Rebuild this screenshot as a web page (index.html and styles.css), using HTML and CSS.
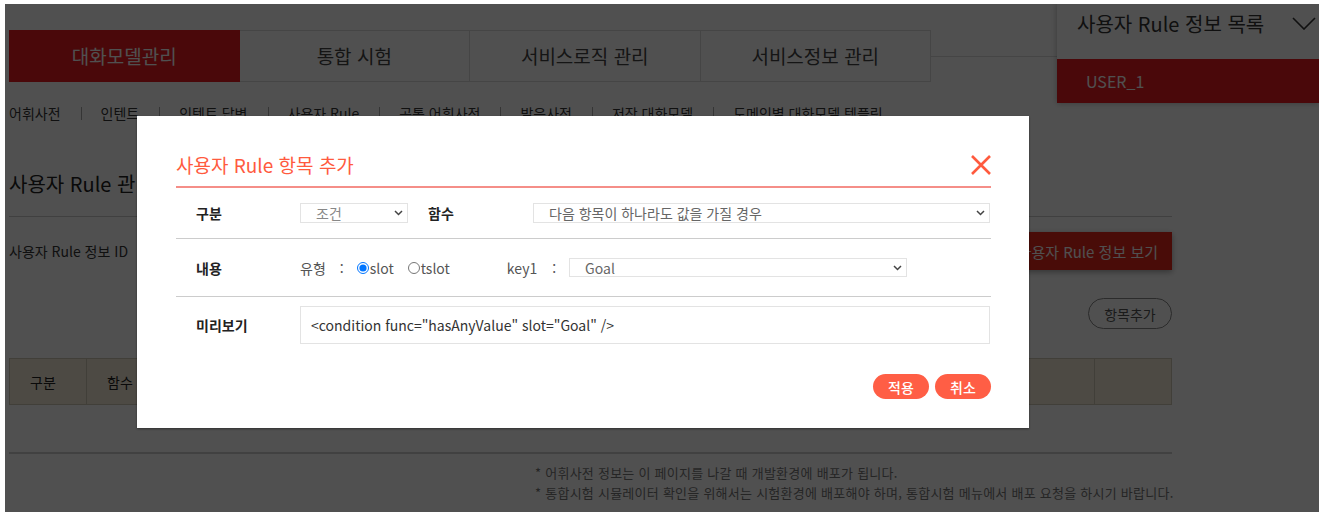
FILE: index.html
```html
<!DOCTYPE html>
<html lang="ko">
<head>
<meta charset="utf-8">
<title>사용자 Rule 관리</title>
<link rel="stylesheet" href="styles.css">
</head>
<body>
<div class="frame">
  <div class="page">
    <nav class="tabs">
      <a class="tab active">대화모델관리</a>
      <a class="tab">통합 시험</a>
      <a class="tab">서비스로직 관리</a>
      <a class="tab">서비스정보 관리</a>
      <span class="tab-fill"></span>
    </nav>
    <ul class="subnav">
      <li>어휘사전</li>
      <li>인텐트</li>
      <li>인텐트 답변</li>
      <li>사용자 Rule</li>
      <li>공통 어휘사전</li>
      <li>발음사전</li>
      <li>저장 대화모델</li>
      <li>도메인별 대화모델 템플릿</li>
    </ul>
    <h2 class="page-title">사용자 Rule 관리</h2>
    <div class="info-row">
      <span class="info-label">사용자 Rule 정보 ID</span>
      <button class="btn-red">사용자 Rule 정보 보기</button>
    </div>
    <div class="add-row">
      <button class="btn-outline">항목추가</button>
    </div>
    <table class="grid">
      <thead>
        <tr>
          <th class="c1">구분</th>
          <th class="c2">함수</th>
          <th class="c3">내용</th>
          <th class="c4"></th>
        </tr>
      </thead>
    </table>
    <div class="notes">
      <p>* 어휘사전 정보는 이 페이지를 나갈 때 개발환경에 배포가 됩니다.</p>
      <p>* 통합시험 시뮬레이터 확인을 위해서는 시험환경에 배포해야 하며, 통합시험 메뉴에서 배포 요청을 하시기 바랍니다.</p>
    </div>
  </div>

  <aside class="rule-list">
    <div class="rule-list-head">
      <span>사용자 Rule 정보 목록</span>
      <svg class="chev-lg" width="24" height="13" viewBox="0 0 24 13"><path d="M1 1 L12 12 L23 1" fill="none" stroke="#333" stroke-width="1.6"/></svg>
    </div>
    <div class="rule-item">USER_1</div>
  </aside>

  <div class="dim"></div>

  <div class="modal">
    <div class="modal-head">
      <h3>사용자 Rule 항목 추가</h3>
      <svg class="close" width="22" height="22" viewBox="0 0 22 22"><path d="M2 2 L20 20 M20 2 L2 20" stroke="#ff5a3e" stroke-width="2.6" fill="none"/></svg>
    </div>
    <div class="mrow r1">
      <span class="mlabel">구분</span>
      <div class="sel w108">
        <select><option>조건</option></select>
        <svg class="chev" width="9" height="6" viewBox="0 0 9 6"><path d="M1 1 L4.5 4.5 L8 1" fill="none" stroke="#444" stroke-width="1.5"/></svg>
      </div>
      <span class="mlabel lbl2">함수</span>
      <div class="sel w457">
        <select><option>다음 항목이 하나라도 값을 가질 경우</option></select>
        <svg class="chev" width="9" height="6" viewBox="0 0 9 6"><path d="M1 1 L4.5 4.5 L8 1" fill="none" stroke="#444" stroke-width="1.5"/></svg>
      </div>
    </div>
    <div class="mrow r2">
      <span class="mlabel">내용</span>
      <span class="txt">유형</span><span class="colon">:</span>
      <label class="radio"><input type="radio" name="t" checked>slot</label>
      <label class="radio"><input type="radio" name="t">tslot</label>
      <span class="txt key">key1</span><span class="colon c2">:</span>
      <div class="sel w338">
        <select><option>Goal</option></select>
        <svg class="chev" width="9" height="6" viewBox="0 0 9 6"><path d="M1 1 L4.5 4.5 L8 1" fill="none" stroke="#444" stroke-width="1.5"/></svg>
      </div>
    </div>
    <div class="mrow r3">
      <span class="mlabel">미리보기</span>
      <div class="preview">&lt;condition func="hasAnyValue" slot="Goal" /&gt;</div>
    </div>
    <div class="mbtns">
      <button class="pill">적용</button>
      <button class="pill">취소</button>
    </div>
  </div>
</div>
</body>
</html>
```

FILE: styles.css
```css
* { box-sizing: border-box; }
html, body { margin: 0; padding: 0; background: #fff; }
body {
  font-family: "Noto Sans CJK KR", "Noto Sans", sans-serif;
  color: #333;
}
.frame {
  position: relative;
  margin: 4px 0 0 5px;
  width: 1314px;
  height: 508px;
  overflow: hidden;
  background: #fff;
}
.page {
  width: 1163px;
  margin-left: 4px;
}

/* tabs */
.tabs {
  display: flex;
  margin-top: 26px;
  height: 52px;
}
.tab {
  width: 230.5px;
  height: 52px;
  border: 1px solid #ddd;
  border-left: none;
  display: flex;
  align-items: center;
  justify-content: center;
  padding-bottom: 2px;
  font-size: 19px;
  color: #444;
}
.tab:first-child { border-left: 1px solid #ddd; }
.tab.active { background: #ea1a20; border-color: #ea1a20; color: #fff; }
.tab-fill {
  flex: 1;
  height: 27px;
  border-bottom: 1px solid #ddd;
}

/* sub navigation */
.subnav {
  list-style: none;
  display: flex;
  margin: 21px 0 0;
  padding: 0;
  font-size: 14px;
  line-height: 20px;
  color: #333;
}
.subnav li { display: flex; align-items: center; }
.subnav li + li::before {
  content: "";
  display: block;
  width: 1px;
  height: 13px;
  background: #aaa;
  margin: 0 19px 0 20px;
}

.page-title {
  margin: 47px 0 0;
  font-size: 20px;
  font-weight: 400;
  line-height: 28px;
  color: #222;
  padding-bottom: 18px;
  border-bottom: 1px solid #ccc;
}

.info-row {
  display: flex;
  align-items: center;
  justify-content: space-between;
  margin-top: 15px;
}
.info-label { font-size: 14px; color: #333; }
.btn-red {
  height: 38px;
  padding: 0 14px 0 16px;
  border: none;
  background: #e8261c;
  color: #fff;
  font-family: inherit;
  font-size: 15px;
  box-shadow: 0 2px 6px rgba(0,0,0,0.35);
}

.add-row {
  display: flex;
  justify-content: flex-end;
  margin-top: 28px;
}
.btn-outline {
  width: 84px;
  height: 31px;
  border: 1px solid #888;
  border-radius: 16px;
  background: #fff;
  color: #555;
  font-family: inherit;
  font-size: 14px;
}

.grid {
  width: 100%;
  margin-top: 29px;
  border-collapse: collapse;
}
.grid th {
  height: 46px;
  background: #f5ecd9;
  border: 1px solid #cfc8b5;
  font-size: 14px;
  font-weight: 400;
  color: #222;
  text-align: left;
  padding-left: 20px;
}
.grid .c1 { width: 77px; }
.grid .c2 { width: 78px; }
.grid .c4 { width: 77px; }

.notes {
  margin-top: 47px;
  border-top: 2px solid #d0d0d0;
  padding: 9px 0 0 526px;
  font-size: 13px;
  letter-spacing: 0.25px;
  line-height: 20px;
  color: #777;
}
.notes p { margin: 0; white-space: nowrap; }

/* right dropdown panel */
.rule-list {
  position: absolute;
  left: 1052px;
  top: 0;
  width: 262px;
  background: #fff;
  box-shadow: 0 0 6px rgba(0,0,0,0.3);
}
.rule-list-head {
  height: 55px;
  display: flex;
  align-items: center;
  justify-content: space-between;
  padding: 0 3px 17px 20px;
  font-size: 20px;
  color: #333;
}
.rule-item {
  height: 44px;
  display: flex;
  align-items: center;
  padding-left: 29px;
  background: #ea1a20;
  color: #fff;
  font-size: 16px;
}

/* overlay */
.dim {
  position: absolute;
  inset: 0;
  background: rgba(0,0,0,0.686);
}

/* modal */
.modal {
  position: absolute;
  left: 132px;
  top: 112px;
  width: 892px;
  height: 312px;
  background: #fff;
  padding: 35px 38px 0 39px;
  box-shadow: 0 1px 2px rgba(0,0,0,0.4);
}
.modal-head {
  display: flex;
  align-items: center;
  justify-content: space-between;
  height: 37px;
  padding-bottom: 7px;
  border-bottom: 2px solid #f58e88;
}
.modal-head h3 {
  margin: 0;
  font-size: 19px;
  font-weight: 400;
  line-height: 28px;
  color: #ff5a3e;
}
.close { margin-right: -1px; }

.mrow {
  display: flex;
  align-items: center;
  padding-left: 20px;
  font-size: 14px;
}
.r1 { height: 51px; border-bottom: 1px solid #ccc; }
.r2 { height: 58px; border-bottom: 1px solid #ccc; }
.r3 { padding-top: 9px; }
.mlabel {
  width: 104px;
  flex: none;
  font-weight: 700;
  color: #222;
}
.mlabel.lbl2 { width: 105px; margin-left: 20px; }

.sel { position: relative; flex: none; }
.sel select {
  appearance: none;
  -webkit-appearance: none;
  width: 100%;
  height: 20px;
  border: 1px solid #e3e3e3;
  background: #fff;
  padding: 0 0 0 15px;
  font-family: inherit;
  font-size: 14px;
  line-height: 18px;
  color: #666;
  outline: none;
}
.sel .chev {
  position: absolute;
  right: 5px;
  top: 7px;
  pointer-events: none;
}
.w108 { width: 108px; }
.w108 select { color: #888; }
.w457 { width: 457px; }
.w338 { width: 338px; height: 19px; }
.w338 select { height: 19px; }

.txt { color: #555; }
.colon { color: #555; margin: 0 13px 0 14px; }
.radio {
  display: inline-flex;
  align-items: center;
  color: #555;
  margin-right: 14px;
}
.radio input {
  margin: 0 1px 0 0;
  width: 12px;
  height: 12px;
}
.key { margin-left: 43px; }
.colon.c2 { margin: 0 13px 0 15px; }

.preview {
  width: 690px;
  height: 38px;
  border: 1px solid #e3e3e3;
  display: flex;
  align-items: center;
  padding-left: 10px;
  color: #333;
  font-size: 14px;
}

.mbtns {
  display: flex;
  justify-content: flex-end;
  gap: 6px;
  margin-top: 30px;
}
.pill {
  width: 56px;
  height: 25px;
  border: none;
  border-radius: 13px;
  background: #ff5e45;
  color: #fff;
  font-family: inherit;
  font-size: 14px;
  font-weight: 500;
  padding: 0;
}
```
